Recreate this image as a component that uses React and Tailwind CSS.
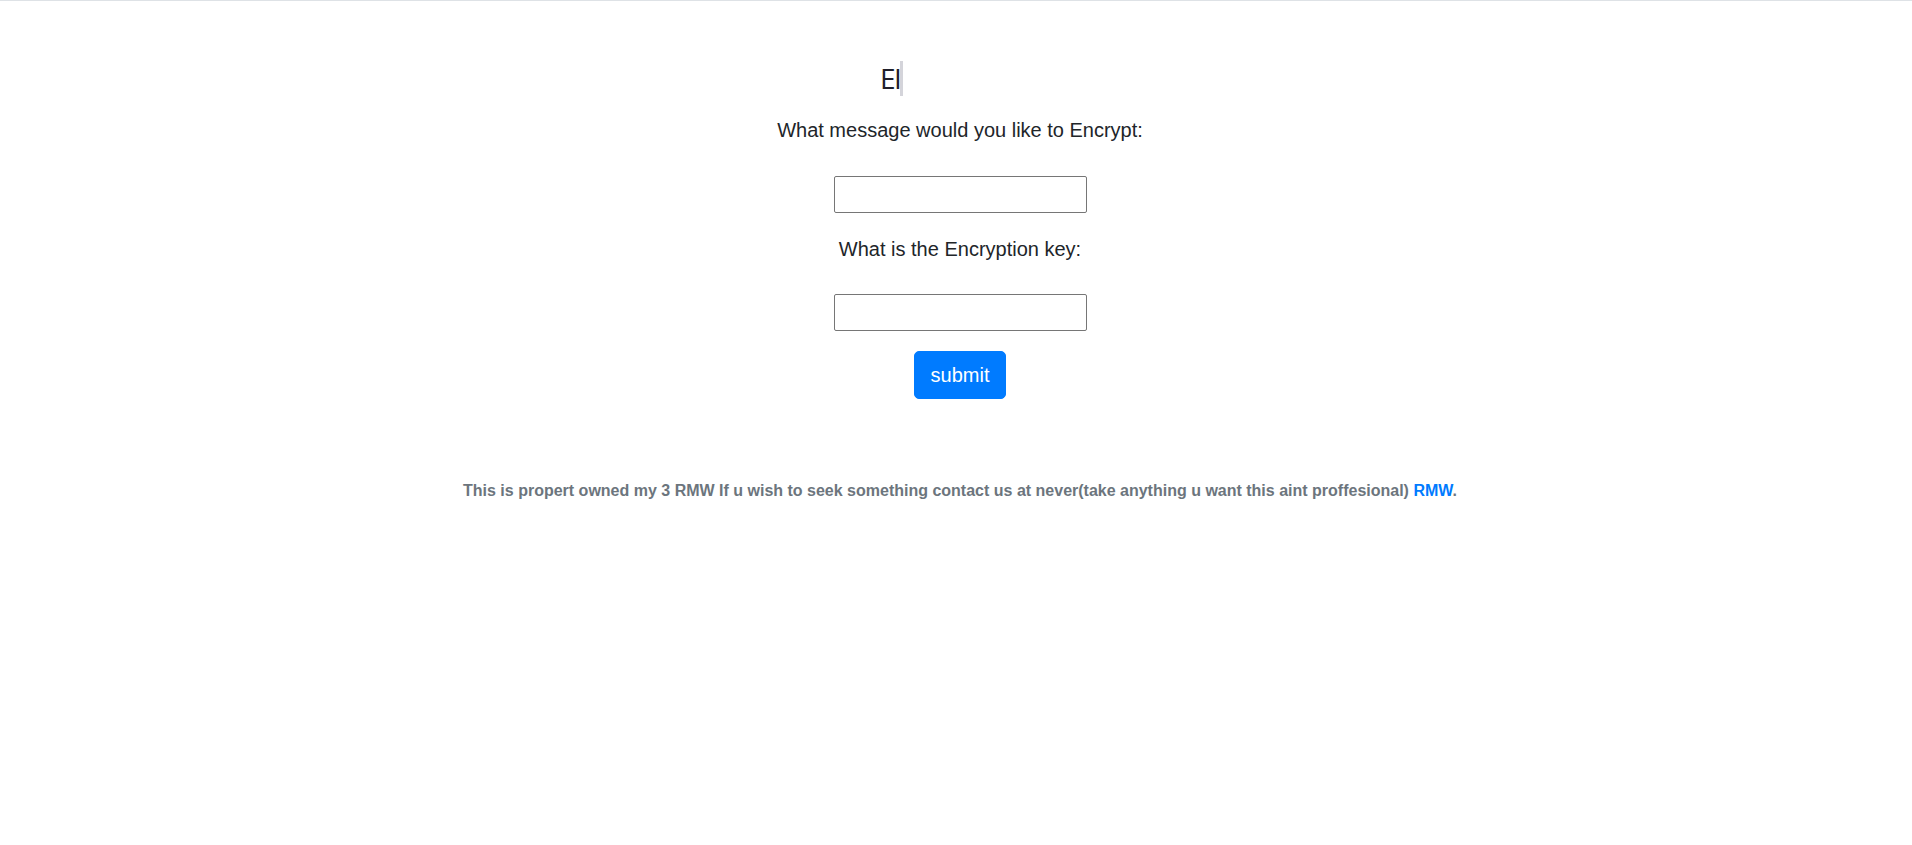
import React from "react";

export default function App() {
  return (
    <div className="min-h-[845px] w-full bg-white border-t border-[#dee2e6] pl-[8px] font-['Liberation_Sans',Arial,sans-serif] text-[#212529]">
      <div className="mt-[60px] mx-auto w-[160px] h-[35px]">
        <span className="inline-block h-[35px] border-r-[3px] border-[#d4d4da] font-['Open_Sans',sans-serif] text-[28px] leading-[35px] tracking-[-1.5px] text-[#1f1f2a]">
          EI
        </span>
      </div>
      <div className="flex flex-col items-center">
        <h5 className="mt-[22px] text-[20px] leading-[24px] font-normal">
          What message would you like to Encrypt:
        </h5>
        <input
          type="text"
          className="mt-[34px] w-[253px] h-[37px] border border-[#767676] rounded-[2px] bg-white px-[2px] text-[20px] outline-none"
        />
        <h5 className="mt-[24px] text-[20px] leading-[24px] font-normal">
          What is the Encryption key:
        </h5>
        <input
          type="text"
          className="mt-[33px] w-[253px] h-[37px] border border-[#767676] rounded-[2px] bg-white px-[2px] text-[20px] outline-none"
        />
        <button
          type="submit"
          className="mt-[20px] h-[48px] px-[16px] border border-[#007bff] bg-[#007bff] text-white text-[20px] leading-[30px] rounded-[5px]"
        >
          submit
        </button>
        <p className="mt-[80px] text-[16px] leading-[24px] font-bold text-[#6c757d]">
          This is propert owned my 3 RMW If u wish to seek something contact us at never(take anything u want this aint proffesional){" "}
          <a href="#" className="text-[#007bff]">RMW</a>.
        </p>
      </div>
    </div>
  );
}
